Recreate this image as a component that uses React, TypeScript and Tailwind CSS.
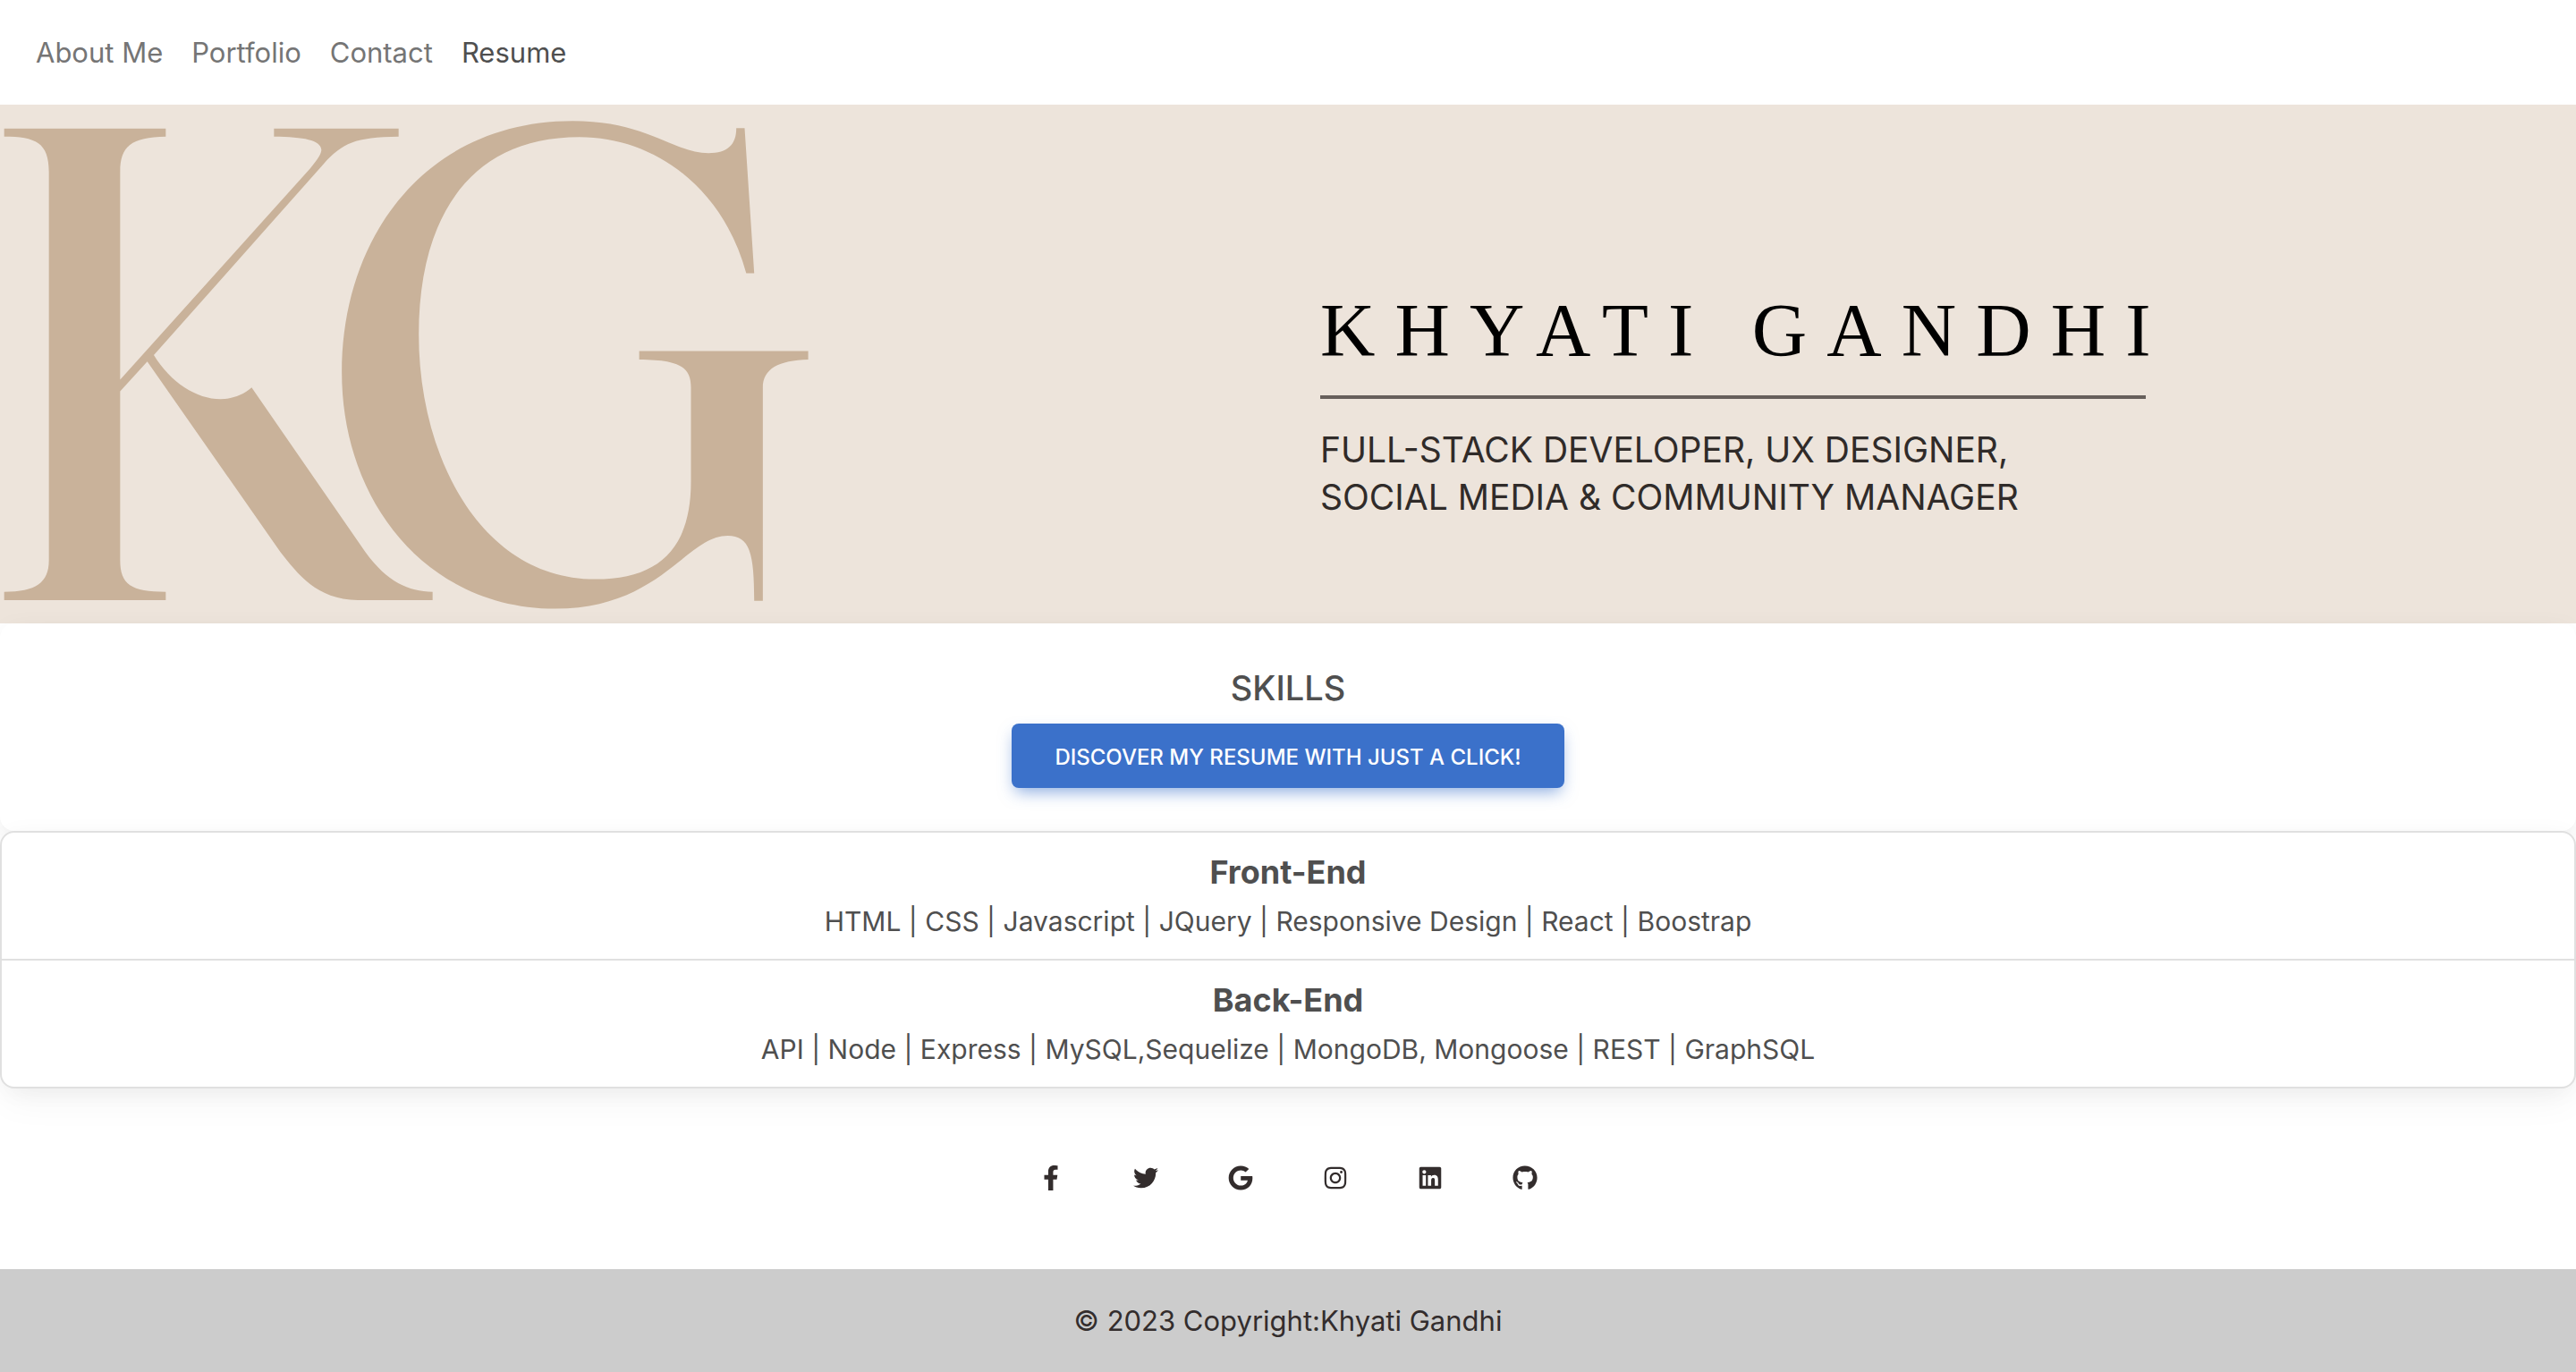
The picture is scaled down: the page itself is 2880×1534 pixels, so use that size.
import {
  FaFacebookF,
  FaTwitter,
  FaGoogle,
  FaInstagram,
  FaLinkedin,
  FaGithub,
} from "react-icons/fa";

const navLinks = [
  { label: "About Me", active: false },
  { label: "Portfolio", active: false },
  { label: "Contact", active: false },
  { label: "Resume", active: true },
];

const skills = [
  {
    title: "Front-End",
    items: "HTML | CSS | Javascript | JQuery | Responsive Design | React | Boostrap",
  },
  {
    title: "Back-End",
    items: "API | Node | Express | MySQL,Sequelize | MongoDB, Mongoose | REST | GraphSQL",
  },
];

const socials = [
  { name: "Facebook", Icon: FaFacebookF },
  { name: "Twitter", Icon: FaTwitter },
  { name: "Google", Icon: FaGoogle },
  { name: "Instagram", Icon: FaInstagram },
  { name: "LinkedIn", Icon: FaLinkedin },
  { name: "GitHub", Icon: FaGithub },
];

function Monogram() {
  return (
    <svg
      viewBox="0 0 920 580"
      className="block h-[580px] w-[920px] fill-[#c9b29a]"
      role="img"
      aria-label="KG logo"
    >
      <g transform="translate(0 -7) scale(.33333 .38265)">
        <path d="M14 88H556V112C440 114 403 140 403 215V822L1040 205C1068 176 1078 160 1078 150C1074 122 1020 113 919 112V88H1337V112C1190 114 1150 130 1085 192L516 750C600 870 750 916 844 845L1225 1325C1300 1415 1370 1440 1451 1442V1466H1200C1060 1464 1000 1390 940 1325L494 769L403 856V1350C403 1420 440 1442 556 1442V1466H14V1442C120 1442 164 1415 164 1350V215C164 130 120 112 14 112Z" />
      </g>
      <g transform="translate(360 -7) scale(.35714 .38265)">
        <path d="M1297 87H1323L1353 511H1328C1255 260 1040 113 806 113C460 113 303 350 303 690C303 1050 500 1405 856 1405C1060 1405 1155 1310 1155 1120V845C1155 785 1120 764 993 763V738H1522V763C1430 765 1380 790 1380 845V1468H1353C1353 1330 1340 1278 1270 1278C1140 1278 1060 1491 730 1491C330 1491 62 1180 62 800C62 400 330 66 785 66C1020 66 1100 160 1210 160C1270 160 1297 135 1297 87Z" />
      </g>
    </svg>
  );
}

export default function App() {
  return (
    <div className="min-h-screen bg-white font-['Inter',sans-serif] text-[31px] leading-[52px] text-[#4f4f4f]">
      <nav className="flex gap-8 px-10 pt-[33px] pb-8">
        {navLinks.map((link) => (
          <a
            key={link.label}
            href="#"
            className={link.active ? "text-[#4f4f4f]" : "text-[#757575]"}
          >
            {link.label}
          </a>
        ))}
      </nav>

      <header className="grid grid-cols-2 bg-[#ede4db]">
        <Monogram />
        <div className="flex flex-col items-start pt-[210px] pl-9">
          <h1 className="font-['Liberation_Serif',serif] text-[85px] leading-[85px] tracking-[0.26em] whitespace-nowrap text-black">
            KHYATI GANDHI
          </h1>
          <hr className="mt-[30px] h-1 w-[923px] border-0 bg-[#675f5b]" />
          <p className="mt-[30px] text-[39px] leading-[53px] whitespace-nowrap text-[#302b29]">
            FULL-STACK DEVELOPER, UX DESIGNER,
            <br />
            SOCIAL MEDIA &amp; COMMUNITY MANAGER
          </p>
        </div>
      </header>

      <main className="text-center">
        <section className="flex flex-col items-center rounded-2xl bg-white pt-12 pb-12 shadow-[0_4px_30px_-6px_rgba(0,0,0,0.07),0_20px_40px_-4px_rgba(0,0,0,0.04)]">
          <h2 className="mb-4 text-[38px] leading-12 font-medium">SKILLS</h2>
          <button
            type="button"
            className="rounded-lg bg-[#3b71ca] px-12 pt-5 pb-4 text-[24px] leading-9 font-medium text-white shadow-[0_8px_18px_-4px_rgba(59,113,202,0.6)]"
          >
            DISCOVER MY RESUME WITH JUST A CLICK!
          </button>
        </section>

        <ul className="divide-y-2 divide-[#e0e0e0] rounded-2xl border-2 border-[#e0e0e0] bg-white shadow-[0_4px_30px_-6px_rgba(0,0,0,0.07),0_20px_40px_-4px_rgba(0,0,0,0.04)]">
          {skills.map((group) => (
            <li key={group.title} className="py-4">
              <h3 className="text-[36px] leading-[57px] font-bold">{group.title}</h3>
              <p className="text-[30px]">{group.items}</p>
            </li>
          ))}
        </ul>
      </main>

      <footer className="text-center text-[#332d2d]">
        <div className="flex justify-center gap-[78px] pt-[86px] pb-[88px]">
          {socials.map(({ name, Icon }) => (
            <a key={name} href="#" aria-label={name}>
              <Icon size={28} />
            </a>
          ))}
        </div>
        <div className="bg-[#cccccc] py-8">© 2023 Copyright:Khyati Gandhi</div>
      </footer>
    </div>
  );
}
